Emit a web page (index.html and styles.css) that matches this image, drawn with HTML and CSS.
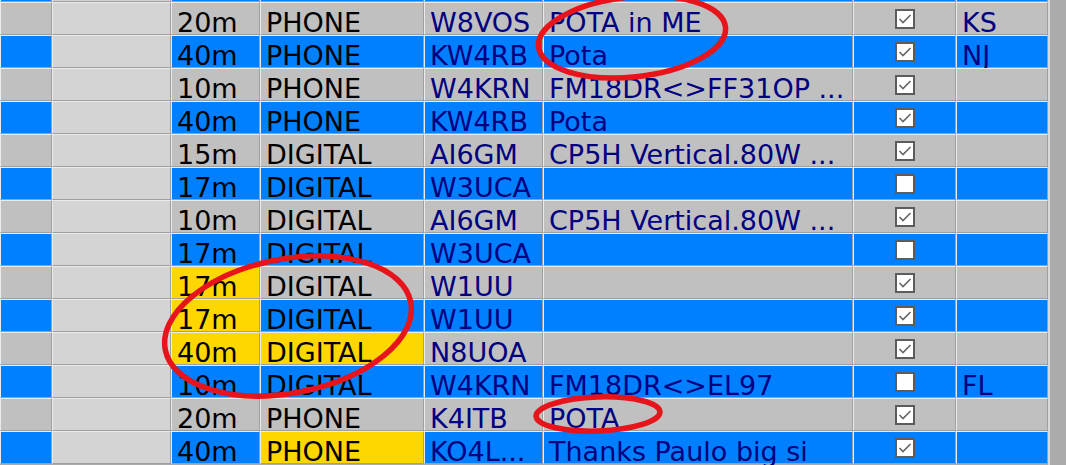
FILE: index.html
```html
<!DOCTYPE html>
<html lang="en">
<head>
  <meta charset="UTF-8">
  <meta name="viewport" content="width=device-width, initial-scale=1.0">
  <title>Spots</title>
  <link rel="stylesheet" href="styles.css">
</head>
<body>
  <div class="window">
    <div class="grid" id="grid"></div>
    <div class="scrollbar"></div>
  </div>

  <!-- red marks drawn over the grid -->
  <svg class="marks" width="1066" height="465" viewBox="0 0 1066 465">
    <ellipse cx="632" cy="37" rx="94" ry="40" transform="rotate(-6 632 37)"></ellipse>
    <ellipse cx="288" cy="326" rx="125" ry="67" transform="rotate(-11 288 326)"></ellipse>
    <ellipse cx="598" cy="414" rx="62" ry="17" transform="rotate(-2 598 414)"></ellipse>
  </svg>

  <script>
    const gridElement = document.getElementById('grid');

    // hl = cells painted yellow
    const spots = [
      { band: '', mode: '', call: '', note: '', check: true, state: '' },
      { band: '20m', mode: 'PHONE', call: 'W8VOS', note: 'POTA in ME', check: true, state: 'KS' },
      { band: '40m', mode: 'PHONE', call: 'KW4RB', note: 'Pota', check: true, state: 'NJ' },
      { band: '10m', mode: 'PHONE', call: 'W4KRN', note: 'FM18DR<>FF31OP ...', check: true, state: '' },
      { band: '40m', mode: 'PHONE', call: 'KW4RB', note: 'Pota', check: true, state: '' },
      { band: '15m', mode: 'DIGITAL', call: 'AI6GM', note: 'CP5H Vertical.80W ...', check: true, state: '' },
      { band: '17m', mode: 'DIGITAL', call: 'W3UCA', note: '', check: false, state: '' },
      { band: '10m', mode: 'DIGITAL', call: 'AI6GM', note: 'CP5H Vertical.80W ...', check: true, state: '' },
      { band: '17m', mode: 'DIGITAL', call: 'W3UCA', note: '', check: false, state: '' },
      { band: '17m', mode: 'DIGITAL', call: 'W1UU', note: '', check: true, state: '', hl: ['band'] },
      { band: '17m', mode: 'DIGITAL', call: 'W1UU', note: '', check: true, state: '', hl: ['band'] },
      { band: '40m', mode: 'DIGITAL', call: 'N8UOA', note: '', check: true, state: '', hl: ['band', 'mode'] },
      { band: '10m', mode: 'DIGITAL', call: 'W4KRN', note: 'FM18DR<>EL97', check: false, state: 'FL' },
      { band: '20m', mode: 'PHONE', call: 'K4ITB', note: 'POTA', check: true, state: '' },
      { band: '40m', mode: 'PHONE', call: 'KO4L...', note: 'Thanks Paulo big si', check: true, state: '', hl: ['mode'] }
    ];

    const checkOn = '<svg class="box" width="20" height="20" viewBox="0 0 20 20"><rect x="1" y="1" width="18" height="18" fill="#fff" stroke="#5c5c5c" stroke-width="2"/><polyline points="4.5,10 8,13.5 15.5,6" fill="none" stroke="#666" stroke-width="1.6"/></svg>';
    const checkOff = '<svg class="box" width="20" height="20" viewBox="0 0 20 20"><rect x="1" y="1" width="18" height="18" fill="#fff" stroke="#5c5c5c" stroke-width="2"/></svg>';

    function addCell(row, cls, text, key, spot) {
      const cell = document.createElement('div');
      cell.className = 'cell ' + row + ' ' + cls;
      if (spot && spot.hl && spot.hl.includes(key)) cell.classList.add('hl');
      cell.textContent = text;
      gridElement.appendChild(cell);
      return cell;
    }

    spots.forEach((spot, index) => {
      const row = index % 2 === 0 ? 'blue' : 'gray';
      addCell(row, 'lead', '');
      addCell(row, 'fixed', '');
      addCell(row, 'band', spot.band, 'band', spot);
      addCell(row, 'mode', spot.mode, 'mode', spot);
      addCell(row, 'call', spot.call);
      addCell(row, 'note', spot.note);
      const box = addCell(row, 'check', '');
      if (index > 0) box.innerHTML = spot.check ? checkOn : checkOff;
      addCell(row, 'state', spot.state);
    });
  </script>
</body>
</html>
```

FILE: styles.css
```css
:root {
  --row-gray: #c0c0c0;
  --row-blue: #0080ff;
  --fixed: #d4d4d4;
  --yellow: #ffd700;
  --navy: #000080;
  --line-dark: #9f9f9f;
  --line-light: #ebebeb;
}

body {
  margin: 0;
  overflow: hidden;
  background: #ababab;
  font-family: "DejaVu Sans", Verdana, sans-serif;
}

.window {
  display: flex;
  height: 465px;
  overflow: hidden;
}

.grid {
  display: grid;
  grid-template-columns: 52px 119px 89px 164px 119px 310px 103px 92px;
  grid-auto-rows: 33px;
  align-content: start;
  margin-top: -31px;
}

.cell {
  box-sizing: border-box;
  border-top: 1px solid var(--line-light);
  border-left: 1px solid var(--line-light);
  border-right: 1px solid var(--line-dark);
  border-bottom: 1px solid var(--line-dark);
  padding: 8px 0 0 5px;
  font-size: 27px;
  line-height: 23px;
  white-space: nowrap;
  color: #000;
}

.cell.gray {
  background: var(--row-gray);
}

.cell.blue {
  background: var(--row-blue);
}

.cell.fixed {
  background: var(--fixed);
}

.cell.hl {
  background: var(--yellow);
}

.cell.call,
.cell.note,
.cell.state {
  color: var(--navy);
}

.cell.check {
  padding: 0;
  display: flex;
  align-items: center;
  justify-content: center;
}

.box {
  display: block;
}

.scrollbar {
  flex: 1;
  border-left: 2px solid #dadada;
  background: #ababab;
}

/* annotations */
.marks {
  position: absolute;
  top: 0;
  left: 0;
  pointer-events: none;
}

.marks ellipse {
  fill: none;
  stroke: #e8141b;
  stroke-width: 5.5;
}
```
